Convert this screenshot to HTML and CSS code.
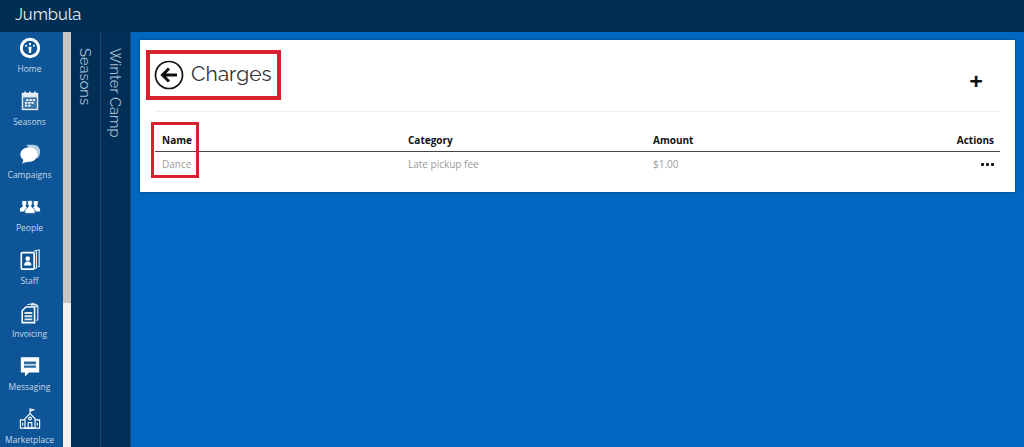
FILE: index.html
```html
<!DOCTYPE html>
<html>
<head>
    <title>Jumbula</title>
    <link rel="stylesheet" href="styles.css">
</head>
<body>
<header class="topbar">Jumbula</header>
<div class="layout">
    <nav class="sidenav">
        <a class="nav-item">
            <svg viewBox="0 0 24 24" width="22" height="22"><circle cx="12" cy="12" r="9.500" fill="none" stroke="#fff" stroke-width="3.200"/><path d="M10.300 10.500h3.400l-.6 7h-2.200z" fill="#fff"/><circle cx="12" cy="7.500" r="1.300" fill="#fff"/><circle cx="7.800" cy="9.500" r="1.100" fill="#fff"/><circle cx="16.200" cy="9.500" r="1.100" fill="#fff"/></svg>
            <span>Home</span>
        </a>
        <a class="nav-item">
            <svg viewBox="0 0 24 24" width="22" height="22"><path d="M3 3h18v19H3z" fill="#e4ebf2"/><path d="M6 1.500h1.500v3H6zM11.200 1.500h1.500v3h-1.500zM16.500 1.500H18v3h-1.500z" fill="#fff"/><path d="M4.500 8h15v12.500h-15z" fill="#3f76a9"/><path d="M8 10h2.500v2H8zM11.500 10H14v2h-2.500zM15 10h2.500v2H15zM6.500 13H9v2H6.500zM10 13h2.500v2H10zM13.500 13H16v2h-2.500zM6.500 16H9v2H6.500zM10 16h2.500v2H10z" fill="#fff"/></svg>
            <span>Seasons</span>
        </a>
        <a class="nav-item">
            <svg viewBox="0 0 24 24" width="22" height="22"><path d="M8 2h7c5 0 8 3 8 7.500 0 3-1.500 6-3 7.500z" fill="#b9cfe3"/><path d="M11 4.500c5 0 9 3.200 9 8s-4 8-9 8c-2 0-4.500.800-8 2 1.200-1.500 2-3.200 1.500-4.500C2.500 16.500 1.500 14.500 1.500 12.500c0-4.800 4.500-8 9.500-8z" fill="#fff"/></svg>
            <span>Campaigns</span>
        </a>
        <a class="nav-item">
            <svg viewBox="0 0 24 24" width="22" height="22"><g fill="#fff"><path d="M3.500 5.500h4.500v3.500l-1 2 3 3v3H1v-3l3.500-3-1-2zM16 5.500h4.500V9l-1 2 3.500 3v3h-9v-3l3-3-1-2z"/><path d="M9.500 5h5v4l-1 2.500 4 3.500v4H6.500v-4l4-3.500-1-2.500z" stroke="#0d5596" stroke-width=".800"/></g></svg>
            <span>People</span>
        </a>
        <a class="nav-item">
            <svg viewBox="0 0 24 24" width="22" height="22"><path d="M16 2.500l3-.800v19l-2 .500M20 1.500l2-.500v18l-1.500.500" fill="none" stroke="#dfe8f0" stroke-width="1.300"/><rect x="2.500" y="4" width="14" height="18" rx="1" fill="none" stroke="#fff" stroke-width="1.800"/><circle cx="9.500" cy="10.500" r="2.500" fill="#fff"/><path d="M5.500 18c0-3 1.500-4.500 4-4.500s4 1.500 4 4.500z" fill="#fff"/></svg>
            <span>Staff</span>
        </a>
        <a class="nav-item">
            <svg viewBox="0 0 24 24" width="22" height="22"><path d="M9 3l7-1.500 1.500 2M13 3.500l6-1 1 2M17 5l3.500-.500v15l-1.500.500" fill="none" stroke="#dfe8f0" stroke-width="1.300"/><path d="M7.500 5.500h9.500v17H3.500v-13z" fill="none" stroke="#fff" stroke-width="1.700"/><path d="M6 11h8.500v2H6zM6 14.500h8.500v2H6zM6 18h8.500v2H6z" fill="#dfe8f0"/></svg>
            <span>Invoicing</span>
        </a>
        <a class="nav-item">
            <svg viewBox="0 0 24 24" width="22" height="22"><path d="M2 2.500h20v16.500H11l-4.500 4.500V19H2z" fill="#fff"/><path d="M5.500 7h13v3h-13zM5.500 11.500h13V14h-13z" fill="#2a6aa3"/></svg>
            <span>Messaging</span>
        </a>
        <a class="nav-item">
            <svg viewBox="0 0 24 24" width="22" height="22"><g fill="none" stroke="#fff" stroke-width="1.200"><path d="M12 6V1l4 1-4 1.500"/><path d="M6.500 11.500 12 6l5.500 5.500V22h-11z"/><path d="M6.500 13H1.500v9h21v-9h-5"/><circle cx="12" cy="11.500" r="1.500"/><path d="M10 22v-6h4v6M4 16v3M20 16v3"/></g></svg>
            <span>Marketplace</span>
        </a>
    </nav>
    <div class="nav-scroll"><div class="nav-thumb"></div></div>
    <div class="side-panel"><span>Seasons</span></div>
    <div class="side-panel"><span>Winter Camp</span></div>
    <main class="content">
        <section class="card">
            <div class="card-head">
                <div class="title-row mark">
                    <svg viewBox="0 0 30 30" width="30" height="30"><circle cx="15" cy="15" r="13.500" fill="none" stroke="#111" stroke-width="1.700"/><path d="M23 15H9M15 8.500 8.500 15l6.500 6.500" fill="none" stroke="#111" stroke-width="3"/></svg>
                    <h1>Charges</h1>
                </div>
                <div class="add-btn">+</div>
            </div>
            <div class="table-wrap">
                <div class="row head-row">
                    <div class="cell">Name</div>
                    <div class="cell">Category</div>
                    <div class="cell">Amount</div>
                    <div class="cell cell-right">Actions</div>
                </div>
                <div class="row body-row">
                    <div class="cell">Dance</div>
                    <div class="cell">Late pickup fee</div>
                    <div class="cell">$1.00</div>
                    <div class="cell cell-right dots"><i></i><i></i><i></i></div>
                </div>
                <div class="name-mark"></div>
            </div>
        </section>
    </main>
</div>
</body>
</html>
```
FILE: styles.css
```css
html, body {
    margin: 0;
    height: 100%;
    overflow: hidden;
}
body {
    font-family: "Open Sans", Arial, sans-serif;
    background-color: #0066bf;
}
.topbar {
    height: 32px;
    box-sizing: border-box;
    padding: 3px 0 0 15px;
    background-color: #002d52;
    color: #e8eef4;
    font-family: Raleway, "Open Sans", sans-serif;
    font-size: 16.500px;
    line-height: 22px;
}
.layout {
    display: flex;
    height: 415px;
}
.sidenav {
    width: 63px;
    flex: none;
    box-sizing: border-box;
    padding-right: 4px;
    background-color: #0d5596;
    overflow: hidden;
}
.nav-item {
    display: flex;
    flex-direction: column;
    align-items: center;
    height: 53px;
    box-sizing: border-box;
    padding-top: 5px;
    color: #c8d8e6;
    font-size: 8.500px;
    line-height: 12px;
    white-space: nowrap;
}
.nav-item svg {
    flex: none;
    margin-bottom: 4px;
}
.nav-scroll {
    width: 8px;
    flex: none;
    background-color: #f1f1f1;
}
.nav-thumb {
    height: 271px;
    background-color: #c6c6c6;
}
.side-panel {
    width: 29px;
    flex: none;
    background-color: #012f58;
    border-right: 1px solid #1a4a72;
    color: #a9bfd2;
    font-family: Raleway, "Open Sans", sans-serif;
    font-size: 14.700px;
}
.side-panel span {
    display: block;
    writing-mode: vertical-rl;
    padding: 16px 0 0 6px;
}
.content {
    flex: 1;
    padding: 8px 9px 0 9px;
}
.card {
    background-color: #fff;
    height: 152px;
    box-sizing: border-box;
    padding: 0 15px 0 15px;
    box-shadow: 0 0 2px rgba(0, 0, 0, 0.5);
}
.card-head {
    display: flex;
    justify-content: space-between;
    height: 71px;
    border-bottom: 1px solid #eeeeee;
}
.title-row {
    display: flex;
    align-items: center;
    gap: 7px;
    height: 50px;
    margin: 10px 0 0 -1px;
}
.title-row h1 {
    margin: -3px 0 0 0;
    font-family: Raleway, "Open Sans", sans-serif;
    font-size: 21px;
    font-weight: 400;
    color: #333;
}
.mark {
    position: relative;
}
.mark::after {
    content: "";
    position: absolute;
    left: -8px;
    right: -9px;
    top: 0;
    bottom: 0;
    border: 4px solid #d9202e;
}
.add-btn {
    width: 16px;
    margin: 29px 16px 0 0;
    font-size: 24px;
    font-weight: 700;
    line-height: 24px;
    color: #111;
    text-align: center;
}
.table-wrap {
    position: relative;
}
.row {
    display: grid;
    grid-template-columns: 246px 245px 1fr 1fr;
    padding: 0 6px 0 7px;
    font-size: 10px;
}
.head-row {
    height: 40px;
    box-sizing: border-box;
    padding-top: 20px;
    line-height: 16px;
    font-weight: 700;
    color: #111;
    border-bottom: 1px solid #444;
}
.body-row {
    height: 24px;
    line-height: 24px;
    color: #9a9a9a;
}
.cell-right {
    text-align: right;
    color: #111;
}
.dots {
    display: flex;
    justify-content: flex-end;
    align-items: center;
    gap: 2px;
}
.dots i {
    width: 3px;
    height: 3px;
    border-radius: 1px;
    background-color: #111;
}
.name-mark {
    position: absolute;
    left: -4px;
    top: 10px;
    width: 48px;
    height: 56px;
    box-sizing: border-box;
    border: 3px solid #d9202e;
}
```
